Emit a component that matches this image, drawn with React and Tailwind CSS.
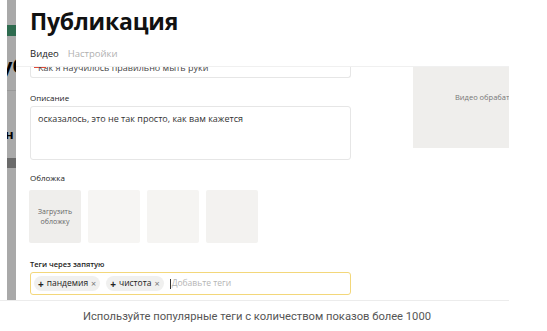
import React from 'react';

const covers = [
    { id: 1, label: 'Загрузить обложку', bg: 'bg-[#efeeec]' },
    { id: 2, label: '', bg: 'bg-[#f6f5f3]' },
    { id: 3, label: '', bg: 'bg-[#f5f4f2]' },
    { id: 4, label: '', bg: 'bg-[#f3f2f0]' },
];

const tags = ['пандемия', 'чистота'];

const Tag = ({ name }) => (
    <div className="flex items-center h-[15px] px-[4px] gap-[3px] rounded-full bg-[#f0f0ef] text-[8.5px] text-[#222]">
        <span className="text-[10px] leading-none font-bold">+</span>
        <span>{name}</span>
        <span className="text-[#777] text-[9px] leading-none">×</span>
    </div>
);

const App = () => {
    return (
        <div className="w-[547px] h-[331px] bg-white flex flex-col font-['Open_Sans',sans-serif] overflow-hidden">
            <div className="flex h-[301px] w-[509px] border-b border-[#ececec]">
                <div className="w-[7px] shrink-0 bg-white" />

                {/* затемнённая страница позади модалки */}
                <div className="w-[9px] shrink-0 bg-[#a9a9a9] flex flex-col overflow-hidden">
                    <div className="h-[25px]" />
                    <div className="h-[11px] bg-[#2e6b4f]" />
                    <div className="h-[20px]" />
                    <div className="h-[20px] text-[20px] leading-[20px] font-bold text-black -ml-[6px]">уб</div>
                    <div className="h-[14px]" />
                    <div className="h-px bg-[#999]" />
                    <div className="h-[36px]" />
                    <div className="h-[14px] text-[13px] leading-[14px] font-bold text-black -ml-[2px]">н</div>
                    <div className="h-[17px]" />
                    <div className="h-[10px] bg-[#6a6a6a]" />
                </div>

                {/* модалка */}
                <div className="flex-1 bg-white flex flex-col">
                    <div className="h-[67px] shrink-0 border-b border-[#f0f0f0] pl-[14px] pt-[7px]">
                        <div className="text-[23px] leading-[28px] font-bold text-[#111] tracking-[-0.2px]">Публикация</div>
                        <div className="flex gap-[9px] mt-[12px] text-[9.5px]">
                            <span className="text-[#222]">Видео</span>
                            <span className="text-[#b0b0b0]">Настройки</span>
                        </div>
                    </div>

                    <div className="flex">
                        <div className="w-[321px] ml-[14px] flex flex-col">
                            <div className="h-[11px] border border-t-0 border-[#e6e6e6] rounded-b-[3px] overflow-hidden relative">
                                <div className="h-px w-[12px] bg-[#e04a3a] ml-[3px]" />
                                <div className="text-[9px] leading-[10px] text-[#444] pl-[7px] -mt-[5px]">Как я научилось правильно мыть руки</div>
                            </div>

                            <div className="text-[8px] text-[#222] mt-[14px] leading-[12px]">Описание</div>
                            <div className="h-[54px] mt-[2px] border border-[#e6e6e6] rounded-[3px] pl-[7px] pt-[5px] text-[9px] text-[#333]">
                                осказалось, это не так просто, как вам кажется
                            </div>

                            <div className="text-[8px] text-[#222] mt-[12px] leading-[12px]">Обложка</div>
                            <div className="flex gap-[7px] mt-[6px] -ml-px">
                                {covers.map((c) => (
                                    <div
                                        key={c.id}
                                        className={`w-[52px] h-[53px] rounded-[2px] ${c.bg} flex items-center justify-center text-center text-[7px] leading-[10px] text-[#666]`}
                                    >
                                        {c.label && (
                                            <span>Загрузить<br />обложку</span>
                                        )}
                                    </div>
                                ))}
                            </div>

                            <div className="text-[7.5px] font-semibold text-[#222] mt-[15px] leading-[12px]">Теги через запятую</div>
                            <div className="h-[23px] mt-[2px] border-[1.5px] border-[#f3d77a] rounded-[3px] flex items-center gap-[6px] pl-[3px]">
                                {tags.map((t) => (
                                    <Tag key={t} name={t} />
                                ))}
                                <div className="flex items-center text-[8.5px] text-[#b5b5b5]">
                                    <span className="w-px h-[10px] bg-[#333] mr-px" />
                                    Добавьте теги
                                </div>
                            </div>
                        </div>

                        <div className="ml-[62px] w-[96px] h-[81px] bg-[#efeeec] overflow-hidden pt-[25px] pl-[42px]">
                            <div className="text-[7.5px] text-[#777] whitespace-nowrap">Видео обрабатывается</div>
                        </div>
                    </div>
                </div>
            </div>

            <div className="w-[514px] text-center mt-[8px] text-[11.2px] text-[#555] font-['Roboto',sans-serif]">
                Используйте популярные теги с количеством показов более 1000
            </div>
        </div>
    );
};

export default App;
